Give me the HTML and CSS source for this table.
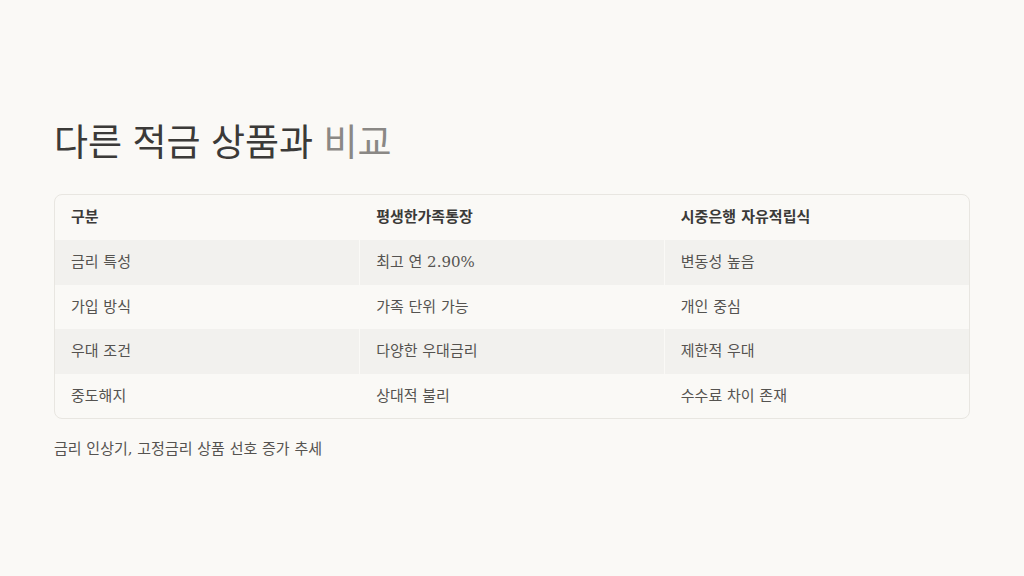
FILE: index.html
```html
<!DOCTYPE html>
<html lang="ko">
<head>
<meta charset="utf-8">
<title>다른 적금 상품과 비교</title>
<link rel="stylesheet" href="styles.css">
</head>
<body>
<main class="slide">
  <h1 class="title">다른 적금 상품과 <span class="muted">비교</span></h1>
  <div class="table-wrap">
    <table class="compare">
      <thead>
        <tr><th>구분</th><th>평생한가족통장</th><th>시중은행 자유적립식</th></tr>
      </thead>
      <tbody>
        <tr><td>금리 특성</td><td>최고 연 2.90%</td><td>변동성 높음</td></tr>
        <tr><td>가입 방식</td><td>가족 단위 가능</td><td>개인 중심</td></tr>
        <tr><td>우대 조건</td><td>다양한 우대금리</td><td>제한적 우대</td></tr>
        <tr><td>중도해지</td><td>상대적 불리</td><td>수수료 차이 존재</td></tr>
      </tbody>
    </table>
  </div>
  <p class="note">금리 인상기, 고정금리 상품 선호 증가 추세</p>
</main>
</body>
</html>
```
FILE: styles.css
```css
html, body {
  margin: 0;
  padding: 0;
  background: #faf9f6;
}
body {
  font-family: "DejaVu Serif", "Noto Sans CJK KR", serif;
  color: #555350;
}
.slide {
  box-sizing: border-box;
  width: 1024px;
  height: 576px;
  padding: 0 54px;
  display: flex;
  flex-direction: column;
  justify-content: center;
}
.title {
  margin: 0 0 30px 0;
  font-family: "Noto Sans CJK KR", sans-serif;
  font-weight: 400;
  font-size: 37px;
  line-height: 48px;
  color: #3b3a38;
}
.title .muted {
  color: #8a8885;
}
.table-wrap {
  border: 1px solid #e8e6e1;
  border-radius: 8px;
  overflow: hidden;
}
.compare {
  width: 100%;
  border-collapse: collapse;
  table-layout: fixed;
  font-size: 15px;
  line-height: 20.5px;
}
.compare th,
.compare td {
  text-align: left;
  padding: 12px 16px;
  border-left: 1px solid #faf9f6;
}
.compare th:first-child,
.compare td:first-child {
  border-left: none;
}
.compare th {
  font-weight: 700;
  color: #3b3a38;
  padding-top: 12px;
  padding-bottom: 13px;
}
.compare td {
  color: #555350;
}
.compare tbody tr:nth-child(odd) {
  background: #f2f1ee;
}
.note {
  margin: 20px 0 0 0;
  font-size: 15px;
  line-height: 21px;
  color: #555350;
}
```
